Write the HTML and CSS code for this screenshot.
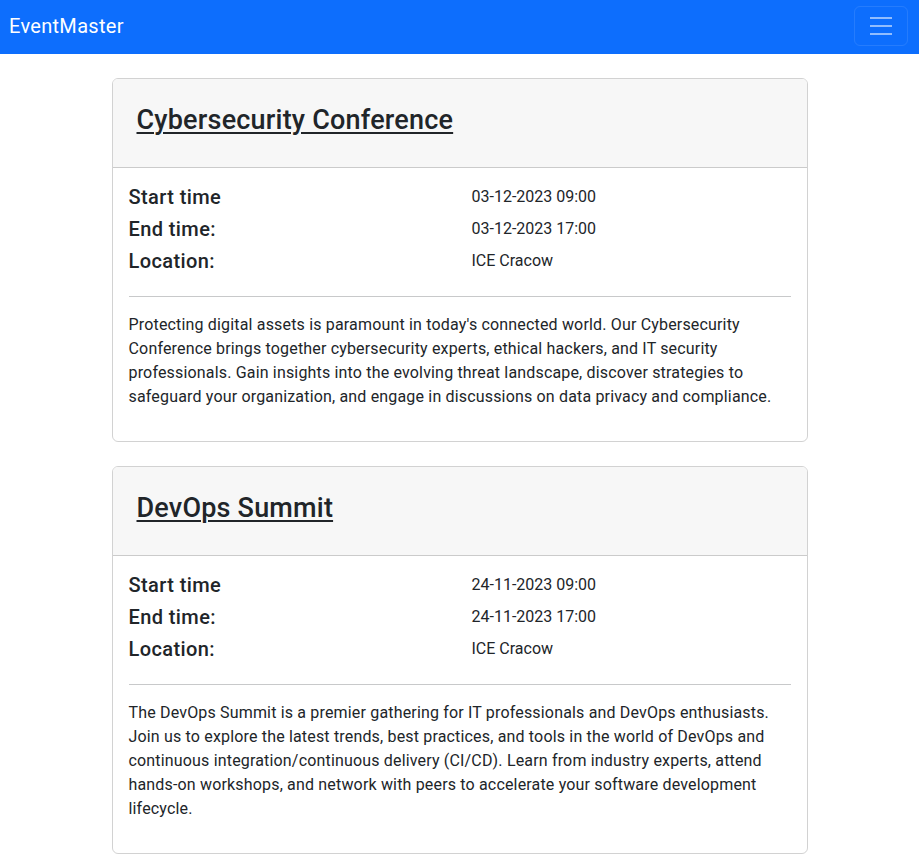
FILE: index.html
```html
<!DOCTYPE html>
<html lang="en">
<head>
<meta charset="utf-8">
<title>EventMaster</title>
<link rel="stylesheet" href="styles.css">
</head>
<body>
<nav class="navbar">
  <a class="brand" href="#">EventMaster</a>
  <button class="toggler" type="button" aria-label="Toggle navigation">
    <svg width="30" height="30" viewBox="0 0 30 30"><path stroke="rgba(255,255,255,0.55)" stroke-linecap="butt" stroke-width="2" d="M4 7h22M4 15h22M4 23h22"/></svg>
  </button>
</nav>
<main class="container">
  <article class="card">
    <header class="card-header"><h3 class="card-title"><a href="#">Cybersecurity Conference</a></h3></header>
    <div class="card-body">
      <div class="row"><h5 class="label">Start time</h5><span class="value">03-12-2023 09:00</span></div>
      <div class="row"><h5 class="label">End time:</h5><span class="value">03-12-2023 17:00</span></div>
      <div class="row"><h5 class="label">Location:</h5><span class="value">ICE Cracow</span></div>
      <hr class="divider">
      <p class="desc">Protecting digital assets is paramount in today's connected world. Our Cybersecurity Conference brings together cybersecurity experts, ethical hackers, and IT security professionals. Gain insights into the evolving threat landscape, discover strategies to safeguard your organization, and engage in discussions on data privacy and compliance.</p>
    </div>
  </article>
  <article class="card">
    <header class="card-header"><h3 class="card-title"><a href="#">DevOps Summit</a></h3></header>
    <div class="card-body">
      <div class="row"><h5 class="label">Start time</h5><span class="value">24-11-2023 09:00</span></div>
      <div class="row"><h5 class="label">End time:</h5><span class="value">24-11-2023 17:00</span></div>
      <div class="row"><h5 class="label">Location:</h5><span class="value">ICE Cracow</span></div>
      <hr class="divider">
      <p class="desc">The DevOps Summit is a premier gathering for IT professionals and DevOps enthusiasts. Join us to explore the latest trends, best practices, and tools in the world of DevOps and continuous integration/continuous delivery (CI/CD). Learn from industry experts, attend hands-on workshops, and network with peers to accelerate your software development lifecycle.</p>
    </div>
  </article>
</main>
</body>
</html>
```
FILE: styles.css
```css
* { box-sizing: border-box; }
html, body { margin: 0; padding: 0; }
body {
  font-family: Roboto, "Liberation Sans", sans-serif;
  font-size: 16px;
  line-height: 1.5;
  color: #212529;
  background: #fff;
}
.navbar {
  height: 54px;
  background: #0d6efd;
  display: flex;
  align-items: center;
  justify-content: space-between;
  padding: 0 11px 2px 9px;
}
.brand {
  color: #fff;
  text-decoration: none;
  font-size: 20px;
  line-height: 30px;
  letter-spacing: 0.3px;
}
.toggler {
  width: 54px;
  height: 40px;
  padding: 0;
  margin: 0;
  background: transparent;
  border: 1px solid rgba(255,255,255,0.1);
  border-radius: 6px;
  display: flex;
  align-items: center;
  justify-content: center;
}
.toggler svg { display: block; }
.container {
  width: 696px;
  margin: 24px auto 0;
  display: flex;
  flex-direction: column;
  gap: 24px;
  padding-bottom: 24px;
}
.card {
  border: 1px solid rgba(0,0,0,0.175);
  border-radius: 6px;
  overflow: hidden;
}
.card-header {
  background: #f7f7f7;
  border-bottom: 1px solid rgba(0,0,0,0.175);
  height: 89px;
  display: flex;
  align-items: center;
  padding: 0 24px;
}
.card-title {
  margin: 0 0 6px;
  font-size: 27px;
  font-weight: 500;
  line-height: 1.2;
  letter-spacing: 0.2px;
}
.card-title a { color: #212529; text-decoration: underline; text-underline-offset: 3px; text-decoration-thickness: 2px; }
.card-body { padding: 16px; }
.row {
  display: grid;
  grid-template-columns: 343px 1fr;
  align-items: center;
  height: 32px;
  padding-bottom: 8px;
}
.label {
  margin: 0;
  font-size: 20px;
  font-weight: 500;
  line-height: 24px;
  letter-spacing: 0.4px;
}
.value { font-size: 16px; line-height: 24px; padding-top: 1px; }
.divider {
  margin: 16px 0;
  border: 0;
  border-top: 1px solid #c8c9ca;
}
.desc { margin: 0 0 16px; line-height: 24px; letter-spacing: 0.17px; }
```
